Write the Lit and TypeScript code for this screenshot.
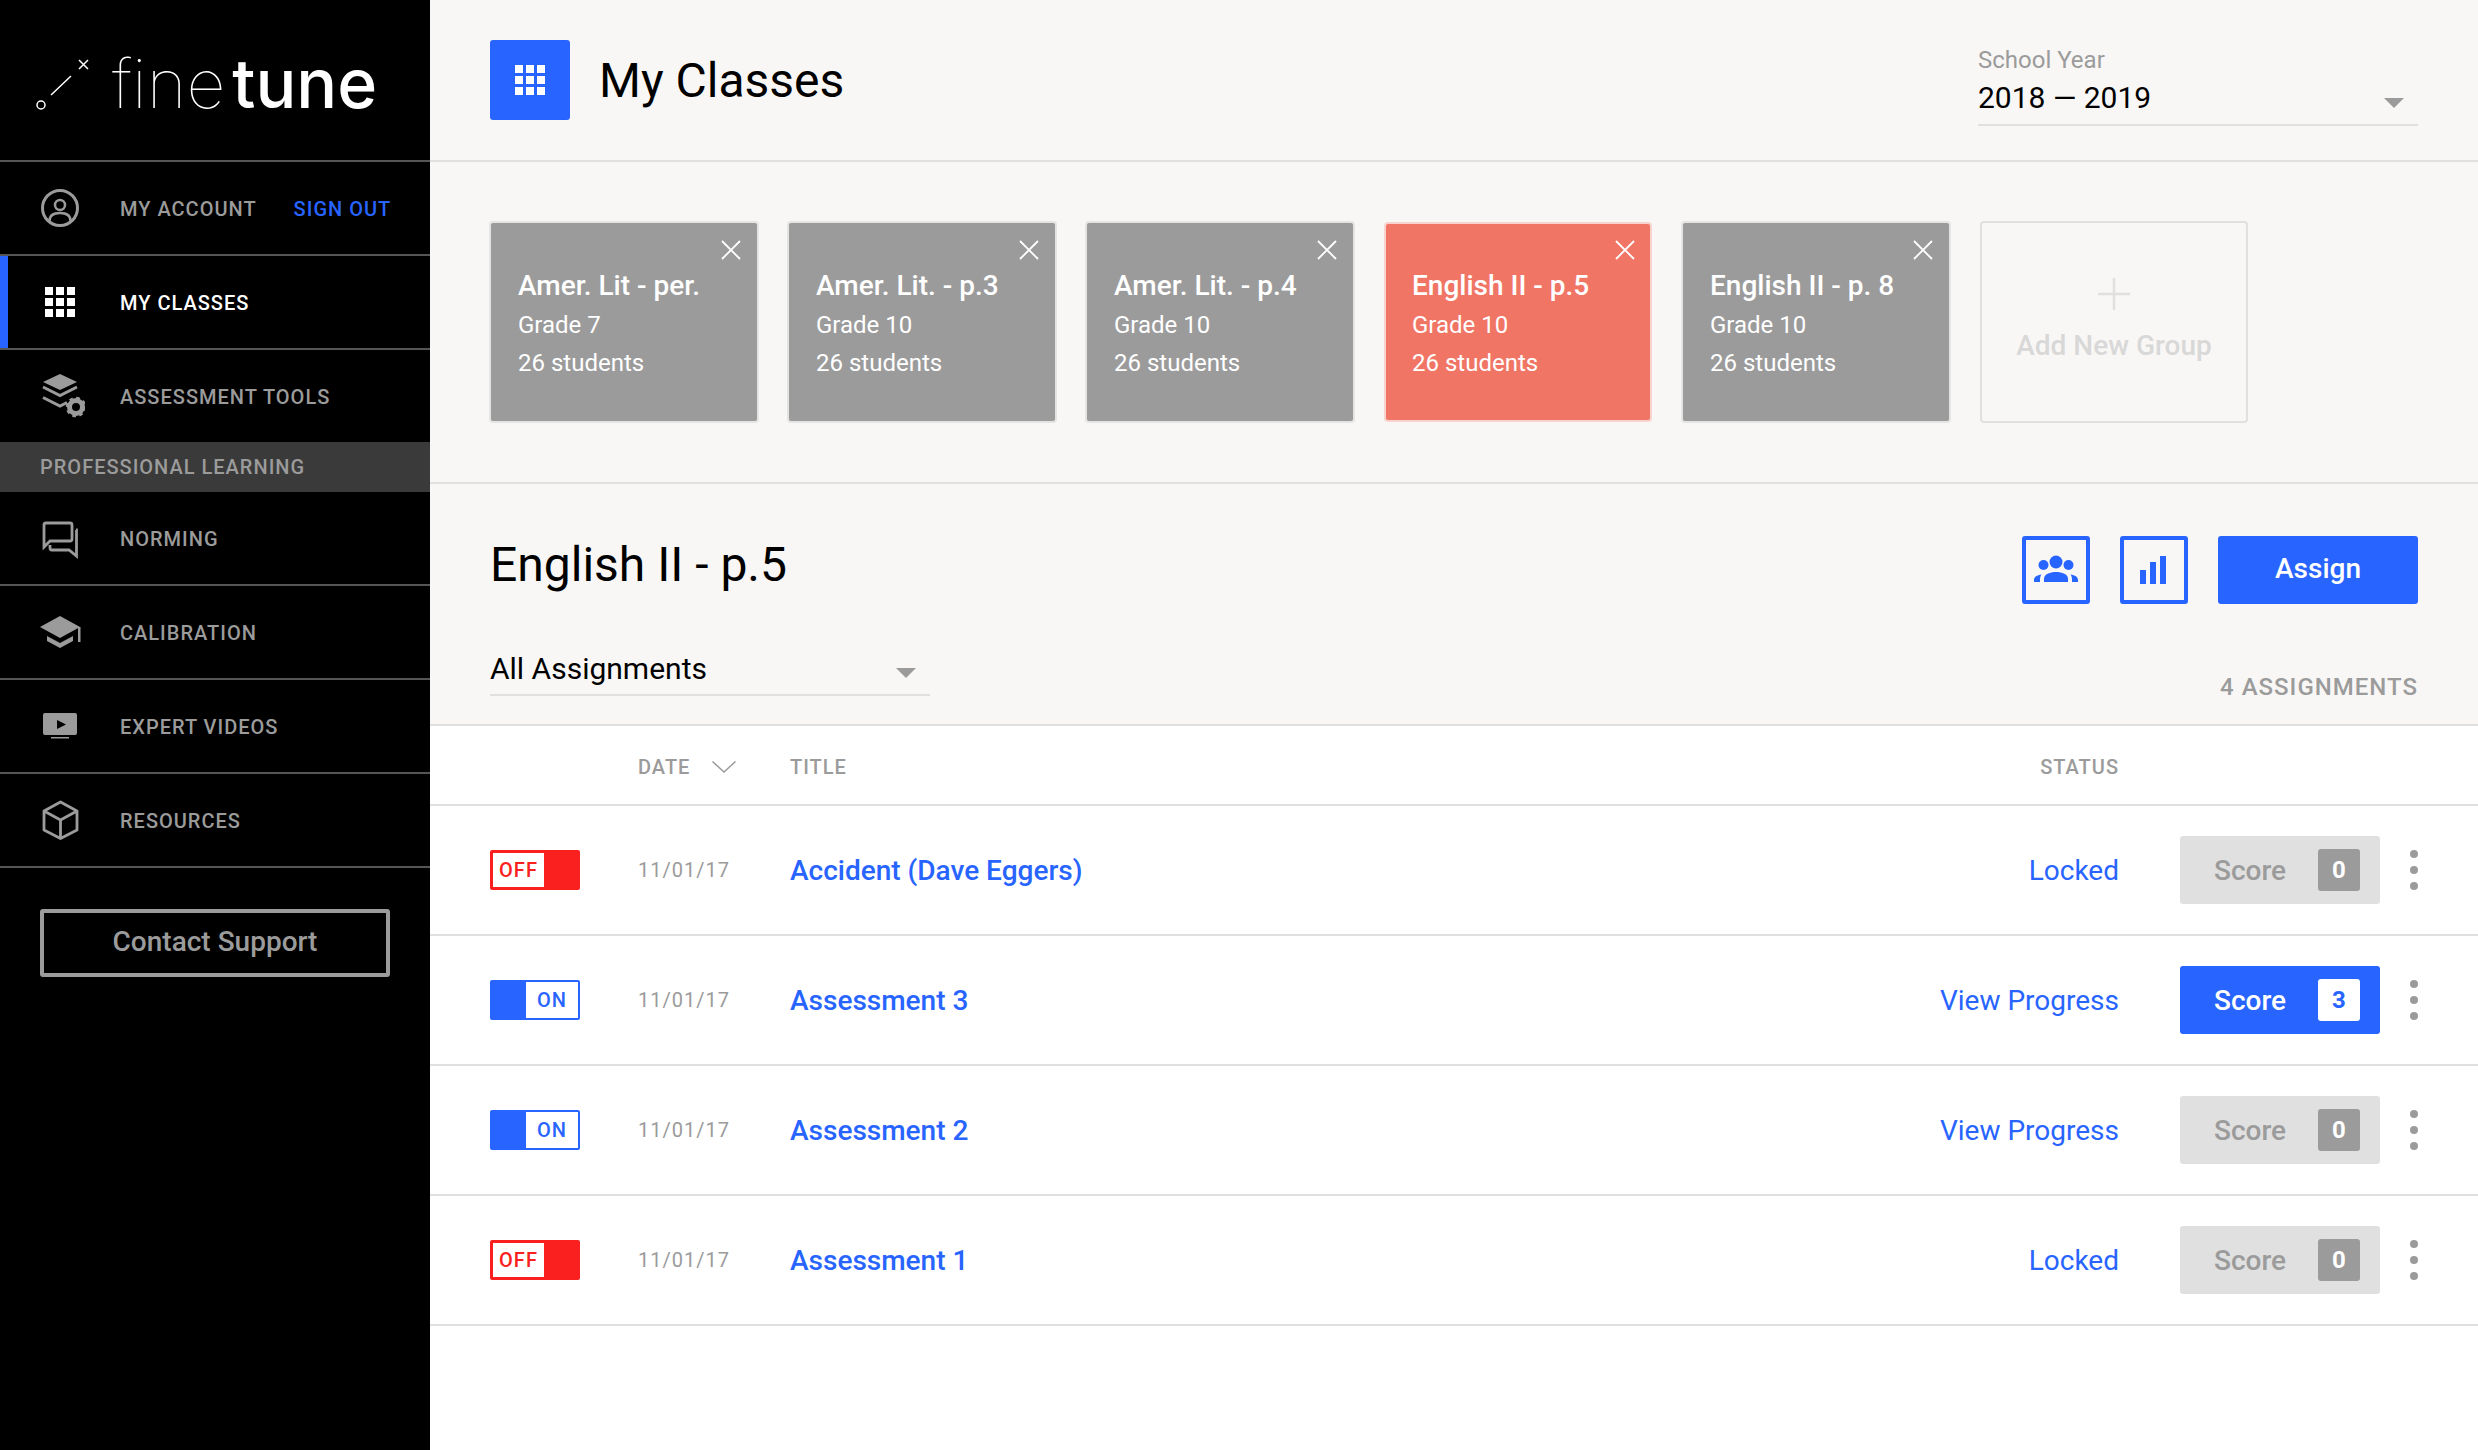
import { html, css, svg, LitElement } from 'lit';
import { customElement } from 'lit/decorators.js';
import { classMap } from 'lit/directives/class-map.js';

const gridIcon = html`
  <svg width="30" height="30" viewBox="0 0 30 30" fill="currentColor">
    ${[0, 11, 22].map((y) => [0, 11, 22].map((x) => svg`<rect x=${x} y=${y} width="8" height="8"></rect>`))}
  </svg>
`;

const navIcons: Record<string, unknown> = {
  account: svg`
    <circle cx="25" cy="25" r="17.5" fill="none" stroke="currentColor" stroke-width="3"></circle>
    <circle cx="25" cy="22" r="5" fill="none" stroke="currentColor" stroke-width="2.5"></circle>
    <path d="M14.5 38c0-6 4.500-8 10.500-8s10.500 2 10.500 8" fill="none" stroke="currentColor" stroke-width="2.500"></path>`,
  tools: svg`
    <path d="M25 3l17 8-17 8-17-8z" fill="currentColor"></path>
    <path d="M8 16l17 8.500 17-8.500M8 26.500l17 8.500 7-3.500" fill="none" stroke="currentColor" stroke-width="3"></path>
    <circle cx="41" cy="36" r="6.500" fill="none" stroke="currentColor" stroke-width="5"></circle>
    <circle cx="41" cy="36" r="8.500" fill="none" stroke="currentColor" stroke-width="3.500" stroke-dasharray="3.400 3.270"></circle>`,
  norming: svg`
    <path d="M9 34V12q0-2 2-2h24q2 0 2 2v14q0 2-2 2H15z" fill="none" stroke="currentColor" stroke-width="2.800"></path>
    <path d="M41 17h0.500v26l-7.500-6H17q-2 0-2-2v-3" fill="none" stroke="currentColor" stroke-width="2.800"></path>`,
  calibration: svg`
    <path d="M25 9l20 11-20 11L5 20z" fill="currentColor"></path>
    <path d="M12 29l13 7 13-7v5l-13 7-13-7z" fill="currentColor"></path>
    <rect x="43" y="20" width="2.500" height="15" fill="currentColor"></rect>`,
  videos: svg`
    <rect x="8" y="12" width="34" height="22" rx="2" fill="currentColor"></rect>
    <path d="M22 19l9 4.500-9 4.500z" fill="#000"></path>
    <rect x="16" y="36" width="18" height="1.500" fill="currentColor"></rect>`,
  resources: svg`
    <path d="M25.500 7L42 16v19l-16.500 8.500L9 35V16zM9 16l16.500 9L42 16M25.500 25v18.500" fill="none" stroke="currentColor" stroke-width="2.800" stroke-linejoin="round"></path>`,
};

const closeIcon = html`
  <svg class="close" width="20" height="20" viewBox="0 0 20 20">
    <path d="M1 1l18 18M19 1L1 19" stroke="#fff" stroke-width="1.800"></path>
  </svg>
`;

const caret = html`<svg class="caret" width="20" height="10" viewBox="0 0 20 10"><path d="M0 0h20L10 10z" fill="#9b9b9b"></path></svg>`;

const groups = [
  { name: 'Amer. Lit - per.', grade: 'Grade 7' },
  { name: 'Amer. Lit. - p.3', grade: 'Grade 10' },
  { name: 'Amer. Lit. - p.4', grade: 'Grade 10' },
  { name: 'English II - p.5', grade: 'Grade 10', active: true },
  { name: 'English II - p. 8', grade: 'Grade 10' },
];

const assignments = [
  { on: false, title: 'Accident (Dave Eggers)', status: 'Locked', score: 0 },
  { on: true, title: 'Assessment 3', status: 'View Progress', score: 3 },
  { on: true, title: 'Assessment 2', status: 'View Progress', score: 0 },
  { on: false, title: 'Assessment 1', status: 'Locked', score: 0 },
];

@customElement('app-root')
export class AppRoot extends LitElement {
  static styles = css`
    :host {
      display: grid;
      grid-template-columns: 430px 1fr;
      min-height: 1450px;
      font-family: Roboto, 'Liberation Sans', sans-serif;
      background: #fff;
      color: #000;
    }

    /* sidebar */
    .side {
      background: #000;
      color: #9b9b9b;
    }
    .logo {
      height: 160px;
      border-bottom: 2px solid #555;
      display: flex;
      align-items: center;
    }
    .logo svg {
      margin-left: 34px;
      margin-top: 4px;
    }
    .wordmark {
      margin: 6px 0 0 18px;
      font-family: Inter, Lato, sans-serif;
      font-size: 68px;
      line-height: 1;
      color: #fff;
    }
    .wordmark .thin {
      font-weight: 100;
    }
    .wordmark .bold {
      font-weight: 500;
      margin-left: 7px;
    }
    .nav {
      height: 92px;
      display: flex;
      align-items: center;
      padding-left: 35px;
      gap: 35px;
      font-size: 20px;
      font-weight: 500;
      letter-spacing: 1px;
      border-bottom: 2px solid #555;
      position: relative;
    }
    .nav span,
    .nav a {
      padding-top: 2px;
    }
    .nav.flat {
      border-bottom: none;
    }
    .nav.current {
      color: #fff;
    }
    .nav.current::before {
      content: '';
      position: absolute;
      left: 0;
      top: 0;
      bottom: 0;
      width: 8px;
      background: #2864ff;
    }
    .nav .slot {
      width: 50px;
      height: 50px;
      display: flex;
      align-items: center;
      justify-content: center;
    }
    .nav a {
      color: #2864ff;
      margin-left: 2px;
    }
    .section {
      height: 50px;
      background: #3a3a3a;
      display: flex;
      align-items: center;
      padding-left: 40px;
      font-size: 20px;
      font-weight: 500;
      letter-spacing: 1px;
    }
    .support {
      margin: 41px 0 0 40px;
      width: 350px;
      height: 68px;
      box-sizing: border-box;
      border: 4px solid #9b9b9b;
      border-radius: 3px;
      padding-bottom: 4px;
      display: flex;
      align-items: center;
      justify-content: center;
      font-size: 28px;
      font-weight: 500;
    }

    /* top bar */
    .main {
      min-width: 0;
    }
    .top {
      height: 160px;
      background: #f8f7f5;
      border-bottom: 2px solid #e0e0e0;
      display: flex;
      align-items: center;
      padding: 0 60px;
    }
    .square {
      width: 80px;
      height: 80px;
      border-radius: 3px;
      background: #2864ff;
      color: #fff;
      display: flex;
      align-items: center;
      justify-content: center;
    }
    h1 {
      margin: 0 0 0 29px;
      font-size: 48px;
      font-weight: 400;
      flex: 1;
    }
    .year {
      align-self: flex-start;
      width: 440px;
      height: 92px;
      margin-top: 34px;
      box-sizing: border-box;
      padding-top: 10px;
      border-bottom: 2px solid #e0e0e0;
      position: relative;
    }
    .year small {
      display: block;
      font-size: 24px;
      line-height: 32px;
      color: #9b9b9b;
    }
    .year strong {
      display: block;
      font-size: 30px;
      line-height: 44px;
      font-weight: 400;
    }
    .year .caret {
      position: absolute;
      right: 14px;
      top: 64px;
    }

    /* groups */
    .groups {
      height: 320px;
      background: #f8f7f5;
      border-bottom: 2px solid #e0e0e0;
      padding: 0 60px;
      display: flex;
      gap: 30px;
      align-items: flex-start;
    }
    .card {
      margin: 59px -1px 0;
      width: 270px;
      height: 202px;
      box-sizing: border-box;
      border: 2px solid #e4e4e2;
      border-radius: 4px;
      background: #9b9b9b;
      color: #fff;
      padding: 43px 0 0 27px;
      position: relative;
    }
    .card.active {
      margin: 60px 0 0;
      width: 268px;
      height: 200px;
      padding: 42px 0 0 26px;
      background: #f07565;
      border-color: #f9d3cd;
    }
    .close {
      position: absolute;
      right: 16px;
      top: 17px;
    }
    .card.active .close {
      right: 15px;
      top: 16px;
    }
    .card b {
      display: block;
      font-size: 28px;
      line-height: 40px;
      font-weight: 500;
    }
    .card span {
      display: block;
      font-size: 24px;
      line-height: 38px;
    }
    .add {
      margin-top: 59px;
      width: 268px;
      height: 202px;
      box-sizing: border-box;
      border: 2px solid #e0e0e0;
      border-radius: 4px;
      display: flex;
      flex-direction: column;
      align-items: center;
      padding-top: 55px;
      color: #d8d8d8;
      font-size: 28px;
      font-weight: 500;
      gap: 19px;
    }

    /* selected group */
    .head {
      height: 240px;
      background: #f8f7f5;
      border-bottom: 2px solid #e0e0e0;
      padding: 0 60px;
      display: grid;
      grid-template-columns: 1fr auto;
      grid-template-rows: 120px 120px;
    }
    h2 {
      margin: 53px 0 0;
      font-size: 48px;
      line-height: 56px;
      font-weight: 400;
    }
    .actions {
      display: flex;
      margin-top: 52px;
      height: 68px;
    }
    .icon-btn {
      width: 68px;
      height: 68px;
      box-sizing: border-box;
      border: 4px solid #2864ff;
      border-radius: 3px;
      margin-right: 30px;
    }
    .icon-btn svg {
      display: block;
      margin: -4px;
    }
    .assign {
      width: 200px;
      height: 68px;
      box-sizing: border-box;
      padding-bottom: 3px;
      border-radius: 3px;
      background: #2864ff;
      color: #fff;
      font-size: 28px;
      font-weight: 500;
      display: flex;
      align-items: center;
      justify-content: center;
    }
    .filter {
      width: 440px;
      height: 50px;
      margin-top: 40px;
      border-bottom: 2px solid #e0e0e0;
      font-size: 30px;
      line-height: 50px;
      position: relative;
    }
    .filter .caret {
      position: absolute;
      right: 14px;
      top: 24px;
    }
    .count {
      align-self: end;
      justify-self: end;
      margin-bottom: 23px;
      font-size: 24px;
      font-weight: 500;
      letter-spacing: 1px;
      color: #9b9b9b;
    }

    /* table */
    .row {
      display: grid;
      grid-template-columns: 148px 152px 1fr auto 200px 98px;
      align-items: center;
      padding-left: 60px;
      height: 128px;
      border-bottom: 2px solid #e0e0e0;
    }
    .row.labels {
      box-sizing: border-box;
      height: 80px;
      padding-top: 4px;
      font-size: 20px;
      font-weight: 500;
      letter-spacing: 1px;
      color: #9b9b9b;
    }
    .sort {
      display: flex;
      align-items: center;
      gap: 22px;
    }
    .row.labels .status-label {
      margin-right: 61px;
    }
    .toggle {
      width: 90px;
      height: 40px;
      box-sizing: border-box;
      border: 3px solid #fb2020;
      border-radius: 2px;
      display: flex;
      font-size: 20px;
      font-weight: 500;
      letter-spacing: 1px;
      color: #fb2020;
      background: #fb2020;
    }
    .toggle.on {
      border-width: 2px;
      border-color: #2864ff;
      background: #2864ff;
      color: #2864ff;
      justify-content: flex-end;
    }
    .toggle span {
      background: #fff;
      width: 51px;
      display: flex;
      align-items: center;
      justify-content: center;
    }
    .toggle.on span {
      width: 52px;
    }
    .date {
      font-size: 20px;
      letter-spacing: 1px;
      color: #9b9b9b;
    }
    .title {
      font-size: 28px;
      font-weight: 500;
      color: #2864ff;
    }
    .status {
      font-size: 28px;
      color: #2864ff;
      margin-right: 61px;
    }
    .score {
      height: 68px;
      border-radius: 3px;
      background: #e0e0e0;
      color: #9b9b9b;
      font-size: 28px;
      font-weight: 500;
      display: flex;
      align-items: center;
      justify-content: space-between;
      padding: 0 20px 0 34px;
    }
    .score i {
      width: 42px;
      height: 42px;
      border-radius: 3px;
      background: #9b9b9b;
      color: #fff;
      font-size: 24px;
      font-style: normal;
      font-weight: 700;
      display: flex;
      align-items: center;
      justify-content: center;
    }
    .score.live {
      background: #2864ff;
      color: #fff;
    }
    .score.live i {
      background: #fff;
      color: #2864ff;
    }
    .dots {
      display: flex;
      flex-direction: column;
      gap: 8px;
      margin-left: 30px;
    }
    .dots u {
      width: 8px;
      height: 8px;
      border-radius: 50%;
      background: #9b9b9b;
    }
  `;

  private navRow(icon: string, label: string, extra = {}) {
    return html`
      <div class=${classMap({ nav: true, ...extra })}>
        <div class="slot"><svg width="50" height="50" viewBox="0 0 50 50">${navIcons[icon]}</svg></div>
        <span>${label}</span>
      </div>
    `;
  }

  render() {
    return html`
      <aside class="side">
        <div class="logo">
          <svg width="60" height="60" viewBox="0 0 60 60">
            <circle cx="7" cy="53" r="4" fill="none" stroke="#fff" stroke-width="1.500"></circle>
            <path d="M17 43l20-19M45 8l9 9M54 8l-9 9" stroke="#fff" stroke-width="1.500" fill="none"></path>
          </svg>
          <div class="wordmark"><span class="thin">fine</span><span class="bold">tune</span></div>
        </div>
        <div class="nav">
          <div class="slot"><svg width="50" height="50" viewBox="0 0 50 50">${navIcons.account}</svg></div>
          <span>MY ACCOUNT</span>
          <a>SIGN OUT</a>
        </div>
        <div class="nav current">
          <div class="slot">${gridIcon}</div>
          <span>MY CLASSES</span>
        </div>
        ${this.navRow('tools', 'ASSESSMENT TOOLS', { flat: true })}
        <div class="section">PROFESSIONAL LEARNING</div>
        ${this.navRow('norming', 'NORMING')}
        ${this.navRow('calibration', 'CALIBRATION')}
        ${this.navRow('videos', 'EXPERT VIDEOS')}
        ${this.navRow('resources', 'RESOURCES')}
        <div class="support">Contact Support</div>
      </aside>

      <main class="main">
        <header class="top">
          <div class="square">${gridIcon}</div>
          <h1>My Classes</h1>
          <div class="year">
            <small>School Year</small>
            <strong>2018 — 2019</strong>
            ${caret}
          </div>
        </header>

        <section class="groups">
          ${groups.map(
            (g) => html`
              <div class=${classMap({ card: true, active: !!g.active })}>
                ${closeIcon}
                <b>${g.name}</b>
                <span>${g.grade}</span>
                <span>26 students</span>
              </div>
            `
          )}
          <div class="add">
            <svg width="32" height="32" viewBox="0 0 32 32"><path d="M16 0v32M0 16h32" stroke="#e0e0e0" stroke-width="2.500"></path></svg>
            <span>Add New Group</span>
          </div>
        </section>

        <section class="head">
          <h2>English II - p.5</h2>
          <div class="actions">
            <div class="icon-btn">
              <svg width="68" height="68" viewBox="0 0 68 68" fill="#2864ff">
                <circle cx="34" cy="26" r="6.500"></circle>
                <circle cx="21.500" cy="29" r="5"></circle>
                <circle cx="46.500" cy="29" r="5"></circle>
                <path d="M22 46v-3c0-5 6-7 12-7s12 2 12 7v3z"></path>
                <path d="M12 46v-2c0-3 3-5 7.500-5.500-1 1-1.500 3-1.500 5V46z"></path>
                <path d="M56 46v-2c0-3-3-5-7.500-5.500 1 1 1.500 3 1.500 5V46z"></path>
              </svg>
            </div>
            <div class="icon-btn">
              <svg width="68" height="68" viewBox="0 0 68 68" fill="#2864ff">
                <rect x="20" y="34" width="6" height="14"></rect>
                <rect x="30" y="26" width="6" height="22"></rect>
                <rect x="40" y="20" width="6" height="28"></rect>
              </svg>
            </div>
            <div class="assign">Assign</div>
          </div>
          <div class="filter">All Assignments ${caret}</div>
          <div class="count">4 ASSIGNMENTS</div>
        </section>

        <div class="row labels">
          <span></span>
          <div class="sort">
            <span>DATE</span>
            <svg width="24" height="12" viewBox="0 0 24 12"><path d="M0.500 0.500L12 11 23.500 0.500" fill="none" stroke="#9b9b9b" stroke-width="1.500"></path></svg>
          </div>
          <span>TITLE</span>
          <span class="status-label">STATUS</span>
        </div>

        ${assignments.map(
          (a) => html`
            <div class="row">
              <div class=${classMap({ toggle: true, on: a.on })}><span>${a.on ? 'ON' : 'OFF'}</span></div>
              <span class="date">11/01/17</span>
              <span class="title">${a.title}</span>
              <span class="status">${a.status}</span>
              <div class=${classMap({ score: true, live: a.score > 0 })}>Score <i>${a.score}</i></div>
              <div class="dots"><u></u><u></u><u></u></div>
            </div>
          `
        )}
      </main>
    `;
  }
}
